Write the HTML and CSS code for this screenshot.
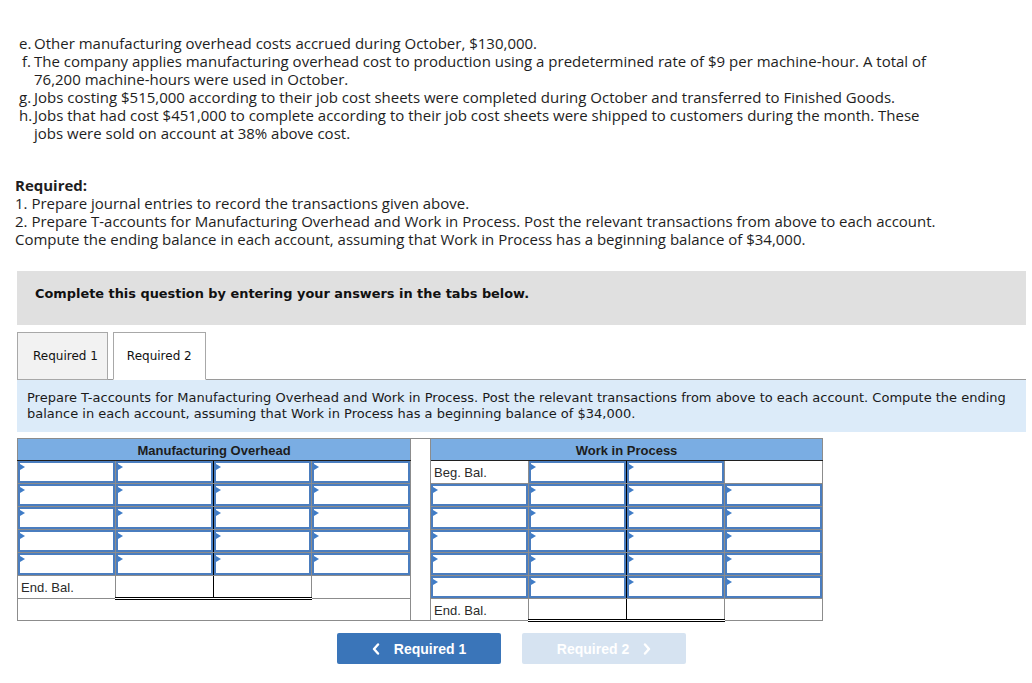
FILE: index.html
```html
<!DOCTYPE html>
<html>
<head>
<meta charset="utf-8">
<link rel="stylesheet" href="styles.css">
</head>
<body>
<div class="page">
  <div class="list">
    <div class="item"><span class="lbl">e.</span><span class="txt">Other manufacturing overhead costs accrued during October, $130,000.</span></div>
    <div class="item"><span class="lbl">f.</span><span class="txt">The company applies manufacturing overhead cost to production using a predetermined rate of $9 per machine-hour. A total of 76,200 machine-hours were used in October.</span></div>
    <div class="item"><span class="lbl">g.</span><span class="txt">Jobs costing $515,000 according to their job cost sheets were completed during October and transferred to Finished Goods.</span></div>
    <div class="item"><span class="lbl">h.</span><span class="txt">Jobs that had cost $451,000 to complete according to their job cost sheets were shipped to customers during the month. These jobs were sold on account at 38% above cost.</span></div>
  </div>

  <div class="required">
    <div class="req-title">Required:</div>
    <div>1. Prepare journal entries to record the transactions given above.</div>
    <div>2. Prepare T-accounts for Manufacturing Overhead and Work in Process. Post the relevant transactions from above to each account. Compute the ending balance in each account, assuming that Work in Process has a beginning balance of $34,000.</div>
  </div>

  <div class="panel">
    <div class="banner">Complete this question by entering your answers in the tabs below.</div>
    <div class="tabs">
      <div class="tab">Required 1</div>
      <div class="tab active">Required 2</div>
    </div>
    <div class="instr">Prepare T-accounts for Manufacturing Overhead and Work in Process. Post the relevant transactions from above to each account. Compute the ending balance in each account, assuming that Work in Process has a beginning balance of $34,000.</div>

    <table class="tacct">
      <colgroup>
        <col class="c"><col class="c"><col class="c"><col class="c4">
        <col class="sepc">
        <col class="c"><col class="c"><col class="c"><col class="c">
      </colgroup>
      <tr>
        <th colspan="4" class="hd">Manufacturing Overhead</th>
        <td rowspan="8" class="sep"></td>
        <th colspan="4" class="hd">Work in Process</th>
      </tr>
      <tr>
        <td class="in"><div class="box"></div></td>
        <td class="in t"><div class="box"></div></td>
        <td class="in"><div class="box"></div></td>
        <td class="in"><div class="box"></div></td>
        <td class="lab">Beg. Bal.</td>
        <td class="in t"><div class="box"></div></td>
        <td class="in"><div class="box"></div></td>
        <td></td>
      </tr>
      <tr>
        <td class="in"><div class="box"></div></td>
        <td class="in t"><div class="box"></div></td>
        <td class="in"><div class="box"></div></td>
        <td class="in"><div class="box"></div></td>
        <td class="in"><div class="box"></div></td>
        <td class="in t"><div class="box"></div></td>
        <td class="in"><div class="box"></div></td>
        <td class="in"><div class="box"></div></td>
      </tr>
      <tr>
        <td class="in"><div class="box"></div></td>
        <td class="in t"><div class="box"></div></td>
        <td class="in"><div class="box"></div></td>
        <td class="in"><div class="box"></div></td>
        <td class="in"><div class="box"></div></td>
        <td class="in t"><div class="box"></div></td>
        <td class="in"><div class="box"></div></td>
        <td class="in"><div class="box"></div></td>
      </tr>
      <tr>
        <td class="in"><div class="box"></div></td>
        <td class="in t"><div class="box"></div></td>
        <td class="in"><div class="box"></div></td>
        <td class="in"><div class="box"></div></td>
        <td class="in"><div class="box"></div></td>
        <td class="in t"><div class="box"></div></td>
        <td class="in"><div class="box"></div></td>
        <td class="in"><div class="box"></div></td>
      </tr>
      <tr>
        <td class="in"><div class="box"></div></td>
        <td class="in t"><div class="box"></div></td>
        <td class="in"><div class="box"></div></td>
        <td class="in"><div class="box"></div></td>
        <td class="in"><div class="box"></div></td>
        <td class="in t"><div class="box"></div></td>
        <td class="in"><div class="box"></div></td>
        <td class="in"><div class="box"></div></td>
      </tr>
      <tr>
        <td class="lab">End. Bal.</td>
        <td class="dbl t"></td>
        <td class="dbl"></td>
        <td></td>
        <td class="in"><div class="box"></div></td>
        <td class="in t"><div class="box"></div></td>
        <td class="in"><div class="box"></div></td>
        <td class="in"><div class="box"></div></td>
      </tr>
      <tr>
        <td colspan="4"></td>
        <td class="lab">End. Bal.</td>
        <td class="dbl t"></td>
        <td class="dbl"></td>
        <td></td>
      </tr>
    </table>

    <div class="nav">
      <div class="btn prev">
        <svg width="8" height="12" viewBox="0 0 8 12"><path d="M6 1.5 L2 6 L6 10.5" fill="none" stroke="#fff" stroke-width="2.4" stroke-linecap="round" stroke-linejoin="round"/></svg>
        <span>Required 1</span>
      </div>
      <div class="btn next">
        <span>Required 2</span>
        <svg width="8" height="12" viewBox="0 0 8 12"><path d="M2 1.5 L6 6 L2 10.5" fill="none" stroke="#fff" stroke-width="2.4" stroke-linecap="round" stroke-linejoin="round"/></svg>
      </div>
    </div>
  </div>
</div>
</body>
</html>
```

FILE: styles.css
```css
* { box-sizing: border-box; }

body {
  margin: 0;
  background: #fff;
  font-family: "Open Sans", "Liberation Sans", sans-serif;
  color: #1e1e1e;
}

.page {
  padding-top: 34px;
}

.list {
  padding-left: 19px;
  width: 940px;
  font-size: 15px;
  line-height: 18px;
}

.item {
  display: grid;
  grid-template-columns: 12px 1fr;
  column-gap: 3px;
}

.lbl {
  text-align: right;
}

.required {
  margin-top: 34px;
  padding-left: 15px;
  width: 955px;
  font-size: 15px;
  line-height: 18px;
}

.req-title {
  font-weight: 700;
}

.panel {
  margin-top: 23px;
  margin-left: 17px;
  width: 1009px;
}

.banner {
  height: 54px;
  background: #e0e0e0;
  padding: 15px 0 0 18px;
  font-family: "DejaVu Sans", Verdana, sans-serif;
  font-weight: 700;
  font-size: 12.9px;
  line-height: 15px;
  color: #111;
}

.tabs {
  margin-top: 7px;
  display: flex;
  gap: 5px;
  border-bottom: 1px solid #9a9a9a;
  height: 48px;
  align-items: flex-end;
}

.tab {
  height: 48px;
  margin-bottom: -1px;
  padding: 0 9px 0 15px;
  display: flex;
  align-items: center;
  border: 1px solid #a8a8a8;
  background: #f2f2f2;
  font-family: "DejaVu Sans", Verdana, sans-serif;
  font-size: 12px;
  color: #111;
}

.tab.active {
  background: #fff;
  border-bottom-color: #fff;
  padding: 0 13px;
}

.instr {
  background: #dcebf9;
  padding: 10px;
  font-family: "DejaVu Sans", Verdana, sans-serif;
  font-size: 13px;
  line-height: 16px;
  color: #1a1a1a;
}

.tacct {
  margin-top: 6px;
  border-collapse: collapse;
  table-layout: fixed;
  width: 805px;
  font-family: "Liberation Sans", Arial, sans-serif;
  font-size: 13px;
  color: #222;
}

.tacct col.c { width: 98px; }
.tacct col.c4 { width: 99px; }
.tacct col.sepc { width: 20px; }

.tacct td, .tacct th {
  border: 1px solid #8c8c8c;
  height: 22px;
  padding: 0;
}

.tacct th.hd {
  background: #7aade3;
  font-weight: 700;
  text-align: center;
  padding-top: 1px;
  border-bottom: 1px solid #1f1f1f;
  color: #1d1d1d;
}

.tacct td.sep {
  background: #fff;
}

.tacct td.t {
  border-right: 1px solid #000;
}

.tacct td.lab {
  padding-left: 3px;
  padding-top: 1px;
  color: #2a2a2a;
}

.tacct td.dbl {
  border-bottom: 3px double #000;
}

.box {
  position: relative;
  height: 22px;
  border: 2px solid #4a7dbf;
  background: #fff;
}

.box::before {
  content: "";
  position: absolute;
  left: 0;
  top: 1px;
  border-left: 5px solid #3f7cc7;
  border-top: 3px solid transparent;
  border-bottom: 3px solid transparent;
}

.nav {
  margin-top: 11px;
  padding-left: 320px;
  display: flex;
  gap: 21px;
}

.btn {
  width: 164px;
  height: 31px;
  border-radius: 2px;
  display: flex;
  align-items: center;
  justify-content: center;
  gap: 14px;
  font-family: "Liberation Sans", Arial, sans-serif;
  font-weight: 700;
  font-size: 14px;
  color: #fff;
}

.btn.prev {
  background: #3a75b9;
}

.btn.next {
  background: #d6e3f1;
}
```
